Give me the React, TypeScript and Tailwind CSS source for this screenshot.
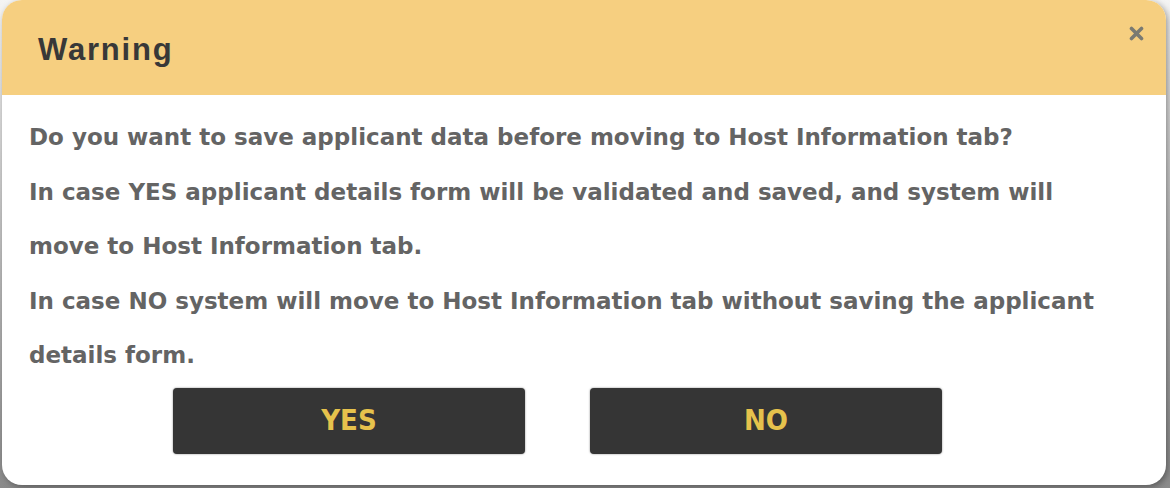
import React from "react";

export default function App() {
  const lines = [
    "Do you want to save applicant data before moving to Host Information tab?",
    "In case YES applicant details form will be validated and saved, and system will",
    "move to Host Information tab.",
    "In case NO system will move to Host Information tab without saving the applicant",
    "details form.",
  ];
  return (
    <div className="w-[1170px] h-[488px] bg-gradient-to-b from-[#f4f4f4] to-[#8a8a8a] overflow-hidden">
      <div className="ml-[2px] w-[1164px] h-[485px] rounded-[20px] overflow-hidden bg-white shadow-[2px_2px_6px_rgba(0,0,0,0.35)] flex flex-col">
        <div className="h-[95px] bg-[#f6cf80] flex items-start justify-between pl-[36px] pr-[22px]">
          <div
            className="pt-[32px] text-[31px] leading-[36px] text-[#383838] font-bold tracking-[1.8px]"
            style={{ fontFamily: '"Liberation Sans", Arial, sans-serif' }}
          >
            Warning
          </div>
          <svg className="mt-[26px]" width="15" height="15" viewBox="0 0 15 15">
            <path d="M2.5 2.5 L12.5 12.5 M12.5 2.5 L2.5 12.5" stroke="#7a7a72" strokeWidth="3.6" strokeLinecap="round" />
          </svg>
        </div>
        <div
          className="pl-[27px] pt-[15px] text-[#646464] font-bold text-[23px] leading-[54.5px]"
          style={{ fontFamily: '"DejaVu Sans", Verdana, sans-serif' }}
        >
          {lines.map((l, i) => (
            <div key={i} className="whitespace-nowrap">
              {l}
            </div>
          ))}
        </div>
        <div className="mt-[5px] pl-[171px] flex gap-[65px]">
          <button
            className="w-[352px] h-[66px] rounded-[4px] bg-[#353535] text-[#e6c24c] text-[29px] font-bold shadow-[0_0_2px_rgba(0,0,0,0.5)]"
            style={{ fontFamily: '"DejaVu Sans Condensed", "DejaVu Sans", sans-serif' }}
          >
            YES
          </button>
          <button
            className="w-[352px] h-[66px] rounded-[4px] bg-[#353535] text-[#e6c24c] text-[29px] font-bold shadow-[0_0_2px_rgba(0,0,0,0.5)]"
            style={{ fontFamily: '"DejaVu Sans Condensed", "DejaVu Sans", sans-serif' }}
          >
            NO
          </button>
        </div>
      </div>
    </div>
  );
}
